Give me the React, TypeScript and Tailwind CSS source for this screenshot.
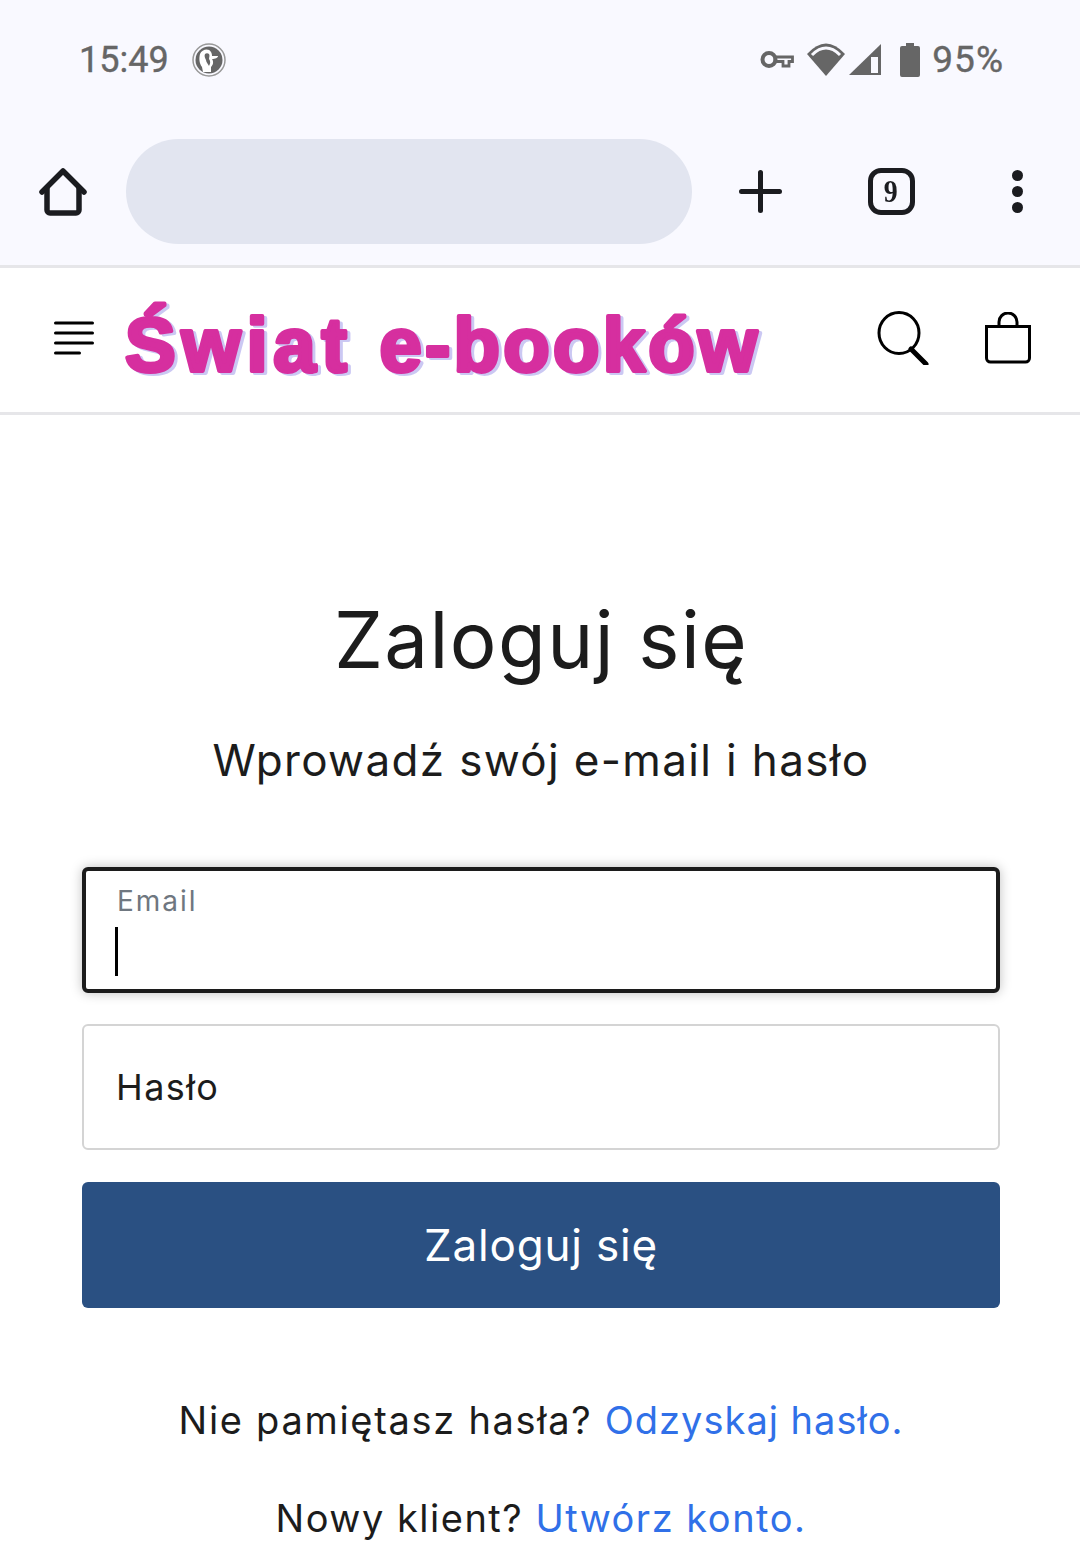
export default function App() {
  return (
    <div className="w-[1080px] h-[1562px] overflow-hidden bg-white font-['Inter',sans-serif] text-[#1c1c1c]">
      {/* Browser chrome */}
      <div className="bg-[#f9f9ff] h-[265px] flex flex-col">
        <div className="h-[118px] pt-[38px] pl-[79px] pr-[76px] flex items-start justify-between text-[#666666] font-['Roboto',sans-serif]">
          <div className="flex items-center gap-[23px]">
            <span className="text-[36px] leading-[43px] translate-y-[1px] [-webkit-text-stroke:0.4px_#666666]">15:49</span>
            <svg width="34" height="34" viewBox="0 0 34 34">
              <circle cx="17" cy="17" r="16" fill="none" stroke="#999" strokeWidth="1.5" />
              <circle cx="17" cy="17" r="13.5" fill="#666" />
              <path d="M8 11c2-5 9-6 11-2 1 2 1 3 1 4l6 0c0 2-3 3-6 3 2 3 1 6-1 8l0 5H11l-1-5C7 20 7 15 8 11z" fill="#fff" />
              <path d="M13 11c1-1 3-1 4 0 1 2 0 3 0 5 2 3 1 5 0 7-1-2-3-4-3-6-1-2-2-4-1-6z" fill="#666" />
            </svg>
          </div>
          <div className="flex items-center">
            <svg width="34" height="20" viewBox="0 0 34 20" className="mr-[12px]">
              <circle cx="9" cy="9.500" r="6.500" fill="none" stroke="#666" strokeWidth="4" />
              <path d="M15 7h17.500v4.500h-3.500v4.500h-6v-4.500h-8z" fill="none" stroke="#666" strokeWidth="2.800" />
            </svg>
            <svg width="40" height="34" viewBox="0 0 40 34" className="mr-[3px]">
              <path d="M20 33 1 11Q20-10 39 11z" fill="#666" />
              <path d="M6 12Q20-2 34 12" fill="none" stroke="#f9f9ff" strokeWidth="3" />
            </svg>
            <svg width="34" height="33" viewBox="0 0 34 33" className="mr-[17px]">
              <path d="M0 32 32 1v31z" fill="#666" />
              <path d="M22 14h7v16h-7z" fill="#f9f9ff" />
            </svg>
            <svg width="20" height="34" viewBox="0 0 20 34" className="mr-[12px]">
              <path d="M6 0h8v3h4a2 2 0 0 1 2 2v27a2 2 0 0 1-2 2H2a2 2 0 0 1-2-2V5a2 2 0 0 1 2-2h4z" fill="#666" />
            </svg>
            <span className="text-[37px] leading-[43px] tracking-[1px] [-webkit-text-stroke:0.4px_#666666]">95%</span>
          </div>
        </div>
        <div className="flex-1 flex items-start pt-[21px]">
          <div className="w-[126px] h-[105px] flex items-center justify-center">
            <svg width="48" height="48" viewBox="0 0 48 48" fill="none" stroke="#1b1c20" strokeWidth="5.500" strokeLinejoin="round" strokeLinecap="round">
              <path d="M3 24 24 3l21 21" />
              <path d="M8 20v22a3 3 0 0 0 3 3h26a3 3 0 0 0 3-3V20" />
            </svg>
          </div>
          <div className="w-[566px] h-[105px] rounded-full bg-[#e2e5f0]" />
          <div className="w-[137px] h-[105px] flex items-center justify-center">
            <svg width="43" height="43" viewBox="0 0 43 43" stroke="#1b1c20" strokeWidth="5" strokeLinecap="round">
              <path d="M2.500 21.500h38M21.500 2.500v38" />
            </svg>
          </div>
          <div className="w-[124px] h-[105px] flex items-center justify-center">
            <div className="w-[47px] h-[47px] rounded-[13px] border-[5px] border-[#1b1c20] flex items-center justify-center font-['Liberation_Serif',serif] font-bold text-[31px] leading-none text-[#1b1c20]">
              <span className="scale-x-90">9</span>
            </div>
          </div>
          <div className="w-[127px] h-[105px] pl-[2px] flex flex-col items-center justify-center gap-[5px]">
            <div className="w-[11px] h-[11px] rounded-full bg-[#1b1c20]" />
            <div className="w-[11px] h-[11px] rounded-full bg-[#1b1c20]" />
            <div className="w-[11px] h-[11px] rounded-full bg-[#1b1c20]" />
          </div>
        </div>
      </div>
      {/* Shop header */}
      <div className="border-t-[3px] border-b-[3px] border-[#e6e6e9] h-[150px] pl-[54px] flex items-start">
        <svg width="40" height="34" viewBox="0 0 40 34" stroke="#000" strokeWidth="3" strokeLinecap="round" className="mt-[53px]">
          <path d="M1.500 2h37M1.500 12h37M1.500 22h37M1.500 32h24" />
        </svg>
        <svg width="680" height="110" viewBox="0 0 680 110" className="ml-[28px] mt-[20px] [filter:drop-shadow(3px_2px_0_#cbc8f3)]">
          <text x="3" y="83" fontFamily="'Liberation Sans', sans-serif" fontWeight="700" fontSize="76" fill="#d62f9f" stroke="#d62f9f" strokeWidth="4" strokeLinejoin="round">
            <tspan letterSpacing="5.800">Świat </tspan>
            <tspan letterSpacing="3.300">e-booków</tspan>
          </text>
        </svg>
        <div className="ml-auto mt-[43px] mr-[49px] flex items-center gap-[54px]">
          <svg width="54" height="54" viewBox="0 0 54 54" fill="none" stroke="#000">
            <ellipse cx="22" cy="22" rx="20" ry="20.500" strokeWidth="3" />
            <path d="M34 38l15 15" strokeWidth="5" strokeLinecap="round" />
          </svg>
          <svg width="46" height="52" viewBox="0 0 46 52" fill="none" stroke="#000" strokeWidth="3">
            <path d="M1.500 14.500h43V46a4 4 0 0 1-4 4h-35a4 4 0 0 1-4-4z" />
            <path d="M14 14V10a9 9 0 0 1 18 0v4" />
          </svg>
        </div>
      </div>
      {/* Form */}
      <div className="pl-[2px] flex flex-col items-center">
        <h1 className="mt-[175px] text-[78px] leading-[100px] tracking-[1.4px] font-normal">Zaloguj się</h1>
        <p className="mt-[43px] text-[44px] leading-[54px] tracking-[1.350px]">Wprowadź swój e-mail i hasło</p>
        <div className="mt-[80px] w-[918px] h-[126px] rounded-[6px] border-[4px] border-[#1c1c1c] bg-white shadow-[0_0_12px_rgba(0,0,0,0.25)] pl-[31px] pt-[14px]">
          <div className="text-[28px] leading-[32px] tracking-[2px] text-[#6f7780]">Email</div>
          <div className="mt-[10px] -ml-[2px] w-[3px] h-[49px] bg-black" />
        </div>
        <div className="mt-[31px] w-[918px] h-[126px] rounded-[6px] border-[2px] border-[#d4d4d4] bg-white flex items-center pl-[32px] text-[36px] tracking-[1.4px]">Hasło</div>
        <button className="mt-[32px] w-[918px] h-[126px] rounded-[6px] bg-[#2a5082] text-white text-[44px] tracking-[0.8px]">Zaloguj się</button>
        <p className="mt-[84px] text-[38px] leading-[56px] tracking-[1.7px]">Nie pamiętasz hasła? <span className="text-[#3070e8] tracking-[1px]">Odzyskaj hasło.</span></p>
        <p className="mt-[42px] text-[38px] leading-[56px] tracking-[1.5px]">Nowy klient? <span className="text-[#3070e8]">Utwórz konto.</span></p>
      </div>
    </div>
  );
}
